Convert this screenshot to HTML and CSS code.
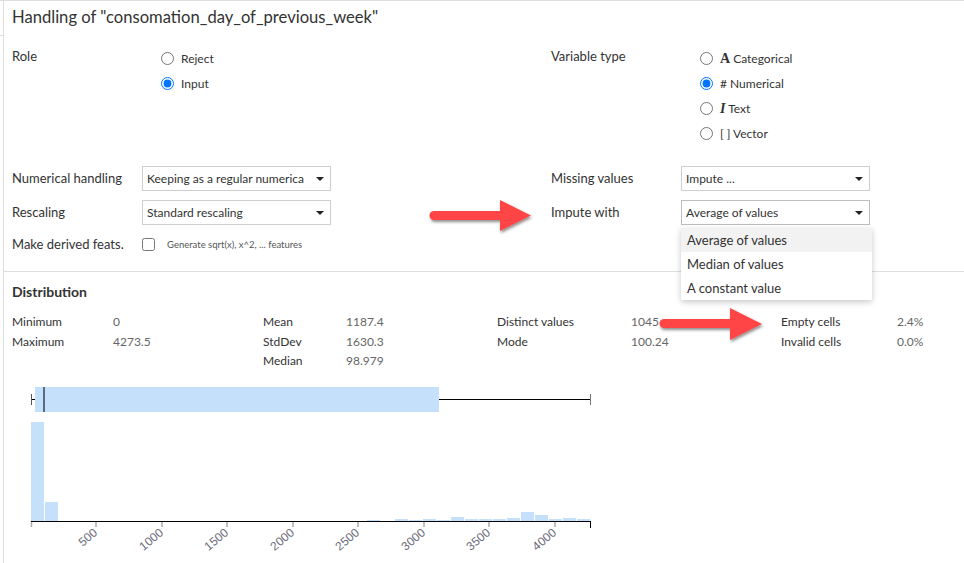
FILE: index.html
```html
<!DOCTYPE html>
<html>
<head>
<meta charset="utf-8">
<link rel="stylesheet" href="styles.css">
</head>
<body>
<div class="page">
  <div class="gutter"><div class="gutter-line"></div></div>
  <div class="main">
    <h1 class="title">Handling of "consomation_day_of_previous_week"</h1>
    <div class="form">
      <div class="lbl lbl-top">Role</div>
      <div class="ctl radios">
        <label class="radio"><input type="radio" name="role"><span>Reject</span></label>
        <label class="radio"><input type="radio" name="role" checked><span>Input</span></label>
      </div>
      <div class="lbl lbl-top">Variable type</div>
      <div class="ctl radios">
        <label class="radio"><input type="radio" name="vt"><span><b class="ic ic-a">A</b> Categorical</span></label>
        <label class="radio"><input type="radio" name="vt" checked><span># Numerical</span></label>
        <label class="radio"><input type="radio" name="vt"><span><b class="ic ic-i">I</b> Text</span></label>
        <label class="radio"><input type="radio" name="vt"><span>[ ] Vector</span></label>
      </div>

      <div class="lbl row2">Numerical handling</div>
      <div class="ctl row2"><div class="select"><span class="sel-text">Keeping as a regular numerica</span><span class="caret"></span></div></div>
      <div class="lbl row2">Missing values</div>
      <div class="ctl row2"><div class="select"><span class="sel-text">Impute ...</span><span class="caret"></span></div></div>

      <div class="lbl">Rescaling</div>
      <div class="ctl"><div class="select"><span class="sel-text">Standard rescaling</span><span class="caret"></span></div></div>
      <div class="lbl">Impute with</div>
      <div class="ctl">
        <div class="select-wrap">
          <div class="select select-open"><span class="sel-text">Average of values</span><span class="caret"></span></div>
          <ul class="menu">
            <li class="menu-item active">Average of values</li>
            <li class="menu-item">Median of values</li>
            <li class="menu-item">A constant value</li>
          </ul>
        </div>
      </div>

      <div class="lbl row4">Make derived feats.</div>
      <div class="ctl row4 check-row"><input type="checkbox" class="check"><span class="hint">Generate sqrt(x), x^2, ... features</span></div>
      <div class="lbl row4"></div>
      <div class="ctl row4"></div>
    </div>

    <section class="dist">
      <h2 class="dist-title">Distribution</h2>
      <div class="stats">
        <span class="k">Minimum</span><span class="v">0</span>
        <span class="k">Mean</span><span class="v">1187.4</span>
        <span class="k">Distinct values</span><span class="v">1045</span>
        <span class="k">Empty cells</span><span class="v">2.4%</span>

        <span class="k">Maximum</span><span class="v">4273.5</span>
        <span class="k">StdDev</span><span class="v">1630.3</span>
        <span class="k">Mode</span><span class="v">100.24</span>
        <span class="k">Invalid cells</span><span class="v">0.0%</span>

        <span class="k"></span><span class="v"></span>
        <span class="k">Median</span><span class="v">98.979</span>
      </div>
      <svg class="chart" width="600" height="191" viewBox="4 372 600 191">
        <!-- boxplot -->
        <line x1="31" y1="399.5" x2="590" y2="399.5" stroke="#000" stroke-width="1"/>
        <line x1="31.5" y1="394" x2="31.5" y2="405" stroke="#555" stroke-width="1"/>
        <line x1="590.5" y1="394" x2="590.5" y2="405" stroke="#777" stroke-width="1"/>
        <rect x="35" y="387" width="404" height="25" fill="#c5e0fb"/>
        <rect x="43" y="387" width="2" height="25" fill="#5a6b80"/>
        <!-- histogram -->
        <g fill="#c5e0fb">
          <rect x="31" y="422" width="13" height="99"/>
          <rect x="45" y="502" width="13" height="19"/>
          <rect x="367" y="520" width="13" height="1"/>
          <rect x="395" y="519" width="13" height="2"/>
          <rect x="409" y="520" width="13" height="1"/>
          <rect x="423" y="519" width="13" height="2"/>
          <rect x="437" y="520" width="13" height="1"/>
          <rect x="451" y="517" width="13" height="4"/>
          <rect x="465" y="519" width="13" height="2"/>
          <rect x="479" y="519" width="13" height="2"/>
          <rect x="493" y="519" width="13" height="2"/>
          <rect x="507" y="518" width="13" height="3"/>
          <rect x="521" y="512" width="13" height="9"/>
          <rect x="535" y="515" width="13" height="6"/>
          <rect x="549" y="519" width="13" height="2"/>
          <rect x="563" y="518" width="13" height="3"/>
          <rect x="577" y="519" width="13" height="2"/>
        </g>
        <!-- axis -->
        <g stroke="#aaa" stroke-width="1.5">
          <line x1="31.5" y1="521" x2="31.5" y2="527"/>
          <line x1="96" y1="521" x2="96" y2="527"/>
          <line x1="162" y1="521" x2="162" y2="527"/>
          <line x1="227" y1="521" x2="227" y2="527"/>
          <line x1="293" y1="521" x2="293" y2="527"/>
          <line x1="358" y1="521" x2="358" y2="527"/>
          <line x1="424" y1="521" x2="424" y2="527"/>
          <line x1="489" y1="521" x2="489" y2="527"/>
          <line x1="555" y1="521" x2="555" y2="527"/>
        </g>
        <line x1="31" y1="521.5" x2="591" y2="521.5" stroke="#000" stroke-width="1"/>
        <line x1="590.5" y1="521" x2="590.5" y2="528" stroke="#000" stroke-width="1"/>
        <g class="ticks" text-anchor="end">
          <text transform="translate(98 534) rotate(-40)">500</text>
          <text transform="translate(164 534) rotate(-40)">1000</text>
          <text transform="translate(229 534) rotate(-40)">1500</text>
          <text transform="translate(295 534) rotate(-40)">2000</text>
          <text transform="translate(360 534) rotate(-40)">2500</text>
          <text transform="translate(426 534) rotate(-40)">3000</text>
          <text transform="translate(491 534) rotate(-40)">3500</text>
          <text transform="translate(557 534) rotate(-40)">4000</text>
        </g>
      </svg>
    </section>
  </div>

  <svg class="arrows" width="964" height="563" viewBox="0 0 964 563">
    <defs>
      <filter id="sh" x="-20%" y="-40%" width="140%" height="180%">
        <feDropShadow dx="1" dy="2" stdDeviation="1.5" flood-color="#000" flood-opacity="0.45"/>
      </filter>
    </defs>
    <g filter="url(#sh)" fill="#ff4444" stroke="#ff4444">
      <line x1="434" y1="214.5" x2="504" y2="214.5" stroke-width="9" stroke-linecap="round"/>
      <polygon points="500,199 531,214.5 500,230" stroke="none"/>
      <line x1="664" y1="322.5" x2="734" y2="322.5" stroke-width="9" stroke-linecap="round"/>
      <polygon points="730,307 762,323 730,339" stroke="none"/>
    </g>
  </svg>
</div>
</body>
</html>
```

FILE: styles.css
```css
* { box-sizing: border-box; }
html, body { margin: 0; padding: 0; background: #fff; }
body {
  font-family: "Lato", "Noto Sans", sans-serif;
  color: #333;
  width: 964px;
  height: 563px;
  overflow: hidden;
}
.page {
  position: relative;
  display: flex;
  border-top: 1px solid #dedede;
  height: 563px;
}
.gutter { width: 3px; flex: none; }
.gutter-line { margin-top: 34px; height: 1px; background: #dedede; }
.main {
  flex: 1;
  border-left: 1px solid #dedede;
  min-width: 0;
}
.title {
  margin: 0;
  padding-left: 8px;
  height: 34px;
  line-height: 32px;
  font-size: 16.6px;
  font-weight: 400;
  color: #333;
}
.form {
  display: grid;
  grid-template-columns: 130px 409px 130px 1fr;
  padding: 12px 0 14px 8px;
  border-bottom: 1px solid #dedede;
  row-gap: 9px;
}
.lbl {
  font-size: 13px;
  line-height: 25px;
  color: #333;
  white-space: nowrap;
}
.lbl-top { line-height: 18px; }
.row2 { margin-top: 11px; }
.row4 { margin-top: -2px; }
.ctl { min-width: 0; }
.radios { padding-left: 19px; display: flex; flex-direction: column; margin-top: -1px; }
.radio {
  display: flex;
  align-items: center;
  height: 25px;
  font-size: 12px;
  color: #333;
}
.radio input {
  margin: 0 7px 0 0;
  width: 13px;
  height: 13px;
  accent-color: #0075ff;
}
.ic { font-family: "Liberation Serif", serif; font-size: 14px; color: #333; }
.ic-a { font-weight: 700; }
.ic-i { font-style: italic; font-weight: 700; }
.select {
  width: 189px;
  height: 25px;
  border: 1px solid #cfcfcf;
  display: flex;
  align-items: center;
  justify-content: space-between;
  padding: 0 6px 0 4px;
  font-size: 12px;
  color: #333;
  background: #fff;
}
.select-open { border-color: #bdbdbd; }
.sel-text { white-space: nowrap; overflow: hidden; }
.caret {
  flex: none;
  width: 0; height: 0;
  border-left: 4px solid transparent;
  border-right: 4px solid transparent;
  border-top: 4px solid #222;
  margin-left: 6px;
}
.select-wrap { position: relative; width: 190px; }
.menu {
  position: absolute;
  top: 28px;
  left: 0;
  width: 191px;
  margin: 0;
  padding: 0;
  list-style: none;
  background: #fff;
  box-shadow: 0 2px 6px rgba(0,0,0,0.22);
  z-index: 5;
}
.menu-item {
  height: 24px;
  line-height: 24px;
  padding-left: 6px;
  font-size: 13px;
  color: #333;
}
.menu-item.active { background: #f2f2f2; }
.check-row { display: flex; align-items: center; height: 25px; }
.check { margin: 0 12px 0 0; width: 13px; height: 13px; }
.hint { font-size: 9.5px; color: #555; }
.dist { padding: 11px 0 0 0; }
.dist-title {
  margin: 0 0 11px 8px;
  font-size: 14px;
  font-weight: 700;
  line-height: 18px;
  color: #333;
}
.stats {
  display: grid;
  grid-template-columns: 101px 150px 83px 151px 134px 150px 116px 60px;
  grid-auto-rows: 19.7px;
  padding-left: 8px;
  font-size: 12px;
  line-height: 20px;
}
.stats .k { color: #333; white-space: nowrap; }
.stats .v { color: #666; white-space: nowrap; }
.chart { display: block; margin-top: 1px; }
.ticks text { font-family: "Liberation Sans", sans-serif; font-size: 12px; fill: #6b6b7a; }
.arrows { position: absolute; left: 0; top: 0; pointer-events: none; z-index: 10; }
```
